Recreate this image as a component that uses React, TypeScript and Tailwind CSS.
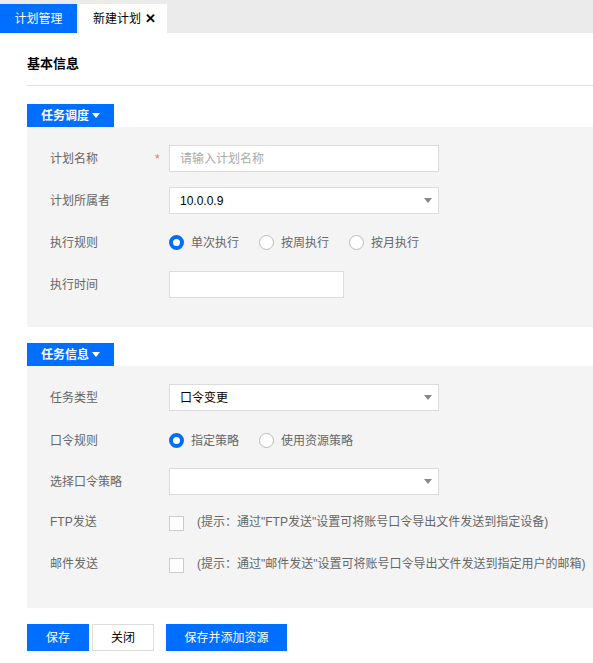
import React from "react";

const font = { fontFamily: '"Liberation Sans", "Noto Sans CJK SC", sans-serif' };

function Caret({ className = "" }: { className?: string }) {
  return (
    <svg width="8" height="5" viewBox="0 0 8 5" className={className}>
      <path d="M0 0 L8 0 L4 5 Z" fill="currentColor" />
    </svg>
  );
}

function Row({ label, star, children, className = "" }: { label: string; star?: boolean; children?: React.ReactNode; className?: string }) {
  return (
    <div className={"flex items-center h-[27px] " + className}>
      <div className="w-[128px] pl-[23px] text-[12px] text-[#666]">{label}</div>
      <div className="w-[14px] text-[#f56c6c] text-[12px]">{star ? "*" : ""}</div>
      <div className="flex items-center">{children}</div>
    </div>
  );
}

function Radio({ on, label }: { on?: boolean; label: string }) {
  return (
    <div className="flex items-center mr-[20px]">
      {on ? (
        <span className="w-[15px] h-[15px] rounded-full border-[4px] border-[#006eff] bg-white box-border" />
      ) : (
        <span className="w-[15px] h-[15px] rounded-full border border-[#bbb] bg-white box-border" />
      )}
      <span className="ml-[7px] text-[12px] text-[#666]">{label}</span>
    </div>
  );
}

function Select({ value }: { value?: string }) {
  return (
    <div className="w-[270px] h-[27px] bg-white border border-[#dcdcdc] flex items-center justify-between px-[10px]">
      <span className="text-[12px] text-black">{value ?? ""}</span>
      <Caret className="text-[#888] mr-[-4px]" />
    </div>
  );
}

function SectionHeader({ label }: { label: string }) {
  return (
    <div className="w-[87px] h-[23px] bg-[#006eff] text-white text-[12px] font-bold flex items-center pl-[14px] gap-[3px]">
      {label}
      <Caret className="text-white" />
    </div>
  );
}

export default function App() {
  return (
    <div className="w-[593px] h-[663px] bg-white overflow-hidden" style={font}>
      <div className="h-[33px] bg-[#ebebeb] flex items-end">
        <div className="w-[77px] h-[29px] bg-[#006eff] text-white text-[12px] flex items-center justify-center">计划管理</div>
        <div className="ml-[2px] w-[88px] h-[29px] bg-white text-black text-[12px] flex items-center pl-[14px] gap-[4px]">
          新建计划
          <span className="font-bold text-[13px] leading-none">✕</span>
        </div>
      </div>
      <div className="pl-[27px]">
        <div className="h-[53px] pt-[21px] text-[13px] font-bold text-black border-b border-[#e0e0e0]">基本信息</div>
        <div className="mt-[18px]">
          <SectionHeader label="任务调度" />
          <div className="bg-[#f4f4f4] h-[200px] pt-[18px] flex flex-col gap-[15px]">
            <Row label="计划名称" star>
              <div className="w-[270px] h-[27px] bg-white border border-[#dcdcdc] flex items-center px-[10px] text-[12px] text-[#aaa]">请输入计划名称</div>
            </Row>
            <Row label="计划所属者">
              <Select value="10.0.0.9" />
            </Row>
            <Row label="执行规则">
              <Radio on label="单次执行" />
              <Radio label="按周执行" />
              <Radio label="按月执行" />
            </Row>
            <Row label="执行时间">
              <div className="w-[175px] h-[27px] bg-white border border-[#dcdcdc]" />
            </Row>
          </div>
        </div>
        <div className="mt-[16px]">
          <SectionHeader label="任务信息" />
          <div className="bg-[#f4f4f4] h-[242px] pt-[18px] flex flex-col">
            <Row label="任务类型">
              <Select value="口令变更" />
            </Row>
            <Row label="口令规则" className="mt-[16px]">
              <Radio on label="指定策略" />
              <Radio label="使用资源策略" />
            </Row>
            <Row label="选择口令策略" className="mt-[14px]">
              <Select />
            </Row>
            <Row label="FTP发送" className="mt-[13px]">
              <span className="w-[15px] h-[15px] border border-[#ccc] bg-white mt-[4px]" />
              <span className="ml-[13px] text-[12px] text-[#666] whitespace-nowrap">(提示：通过"FTP发送"设置可将账号口令导出文件发送到指定设备)</span>
            </Row>
            <Row label="邮件发送" className="mt-[15px]">
              <span className="w-[15px] h-[15px] border border-[#ccc] bg-white mt-[4px]" />
              <span className="ml-[13px] text-[12px] text-[#666] whitespace-nowrap">(提示：通过"邮件发送"设置可将账号口令导出文件发送到指定用户的邮箱)</span>
            </Row>
          </div>
        </div>
        <div className="mt-[16px] flex items-center">
          <div className="w-[62px] h-[27px] bg-[#006eff] text-white text-[12px] flex items-center justify-center">保存</div>
          <div className="ml-[3px] w-[62px] h-[27px] bg-white border border-[#dcdcdc] text-black text-[12px] flex items-center justify-center">关闭</div>
          <div className="ml-[12px] w-[121px] h-[27px] bg-[#006eff] text-white text-[12px] flex items-center justify-center">保存并添加资源</div>
        </div>
      </div>
    </div>
  );
}
